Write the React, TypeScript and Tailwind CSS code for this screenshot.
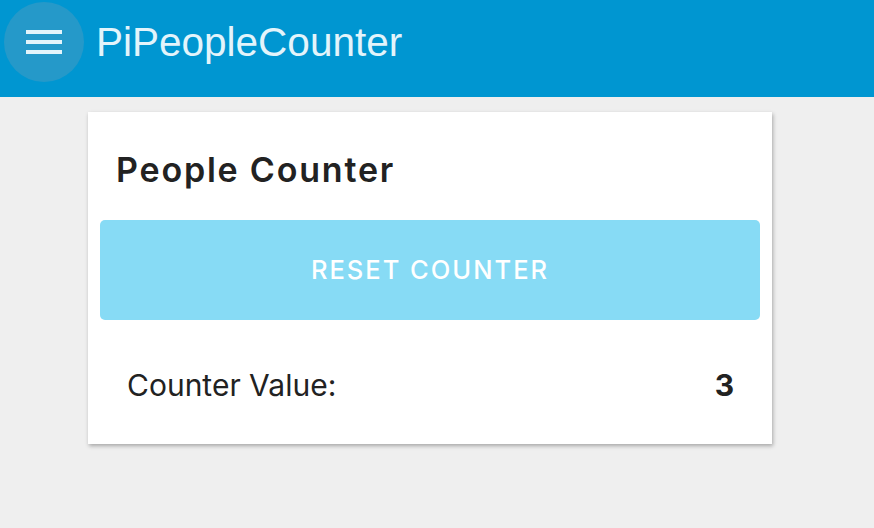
import React from "react";

export default function App() {
  const font = { fontFamily: '"Liberation Sans", Arial, sans-serif' };
  const inter = { fontFamily: 'Inter, "Liberation Sans", Arial, sans-serif' };
  return (
    <div className="min-h-[528px] w-full bg-[#efefef]" style={font}>
      <header className="h-[97px] bg-[#0096d1] pt-[2px] pl-[4px]">
        <div className="flex h-[80px] items-center">
          <button className="flex h-[80px] w-[80px] flex-col items-center justify-center gap-[6px] rounded-full bg-[#2599c9]">
            <span className="block h-[4px] w-[36px] bg-[#e3f4fb]" />
            <span className="block h-[4px] w-[36px] bg-[#e3f4fb]" />
            <span className="block h-[4px] w-[36px] bg-[#e3f4fb]" />
          </button>
          <h1 className="ml-[12px] text-[40.5px] leading-[40px] text-[#e3f4fb]">PiPeopleCounter</h1>
        </div>
      </header>
      <main className="pt-[15px] pl-[88px]" style={inter}>
        <section className="w-[684px] bg-white shadow-[1px_2px_4px_rgba(0,0,0,0.3)]">
          <h2 className="pl-[28px] pt-[41px] text-[34px] font-semibold leading-[34px] tracking-[1.8px] text-[#222]">
            People Counter
          </h2>
          <div className="px-[12px] pt-[33px]">
            <button className="flex h-[100px] w-full items-center justify-center rounded-[5px] bg-[#87dbf5] text-[25.5px] font-medium tracking-[2px] text-white">
              RESET COUNTER
            </button>
          </div>
          <div className="flex items-center justify-between pl-[39px] pr-[38px] pt-[50px] pb-[44px] text-[30px] leading-[30px] text-[#222]">
            <span>Counter Value:</span>
            <span className="font-bold">3</span>
          </div>
        </section>
      </main>
    </div>
  );
}
